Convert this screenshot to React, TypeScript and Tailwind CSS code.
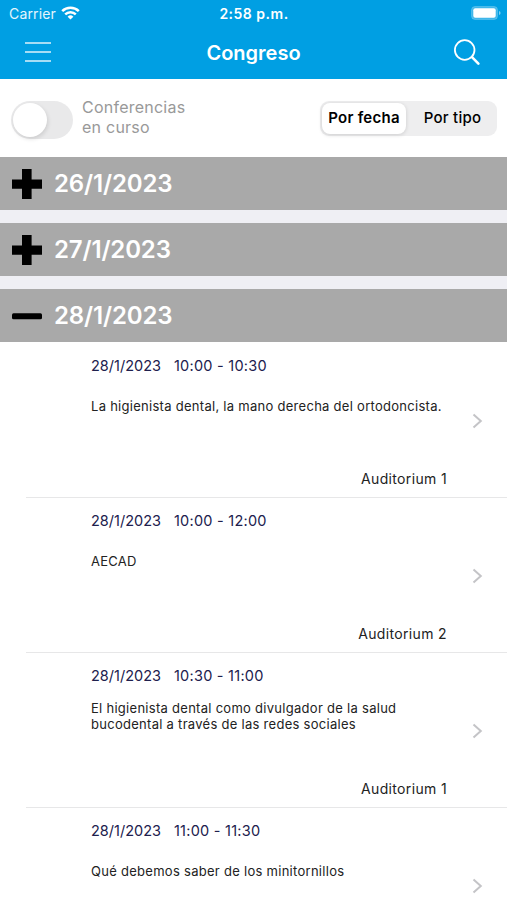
import { useState } from "react";

type Talk = {
  id: string;
  date: string;
  time: string;
  title: string;
  room?: string;
};

type Day = {
  date: string;
  talks: Talk[];
};

const days: Day[] = [
  { date: "26/1/2023", talks: [] },
  { date: "27/1/2023", talks: [] },
  {
    date: "28/1/2023",
    talks: [
      {
        id: "1",
        date: "28/1/2023",
        time: "10:00 - 10:30",
        title: "La higienista dental, la mano derecha del ortodoncista.",
        room: "Auditorium 1",
      },
      {
        id: "2",
        date: "28/1/2023",
        time: "10:00 - 12:00",
        title: "AECAD",
        room: "Auditorium 2",
      },
      {
        id: "3",
        date: "28/1/2023",
        time: "10:30 - 11:00",
        title: "El higienista dental como divulgador de la salud bucodental a través de las redes sociales",
        room: "Auditorium 1",
      },
      {
        id: "4",
        date: "28/1/2023",
        time: "11:00 - 11:30",
        title: "Qué debemos saber de los minitornillos",
      },
    ],
  },
];

function StatusBar() {
  return (
    <div className="grid h-[27px] grid-cols-3 items-center pl-[9px] pr-[6px] text-[14px] leading-none">
      <div className="flex items-center gap-[6px]">
        <span className="text-[14px] tracking-[0.15px] text-white/90">Carrier</span>
        <svg className="-ml-px -mt-px" width="19" height="14" viewBox="0 0 19 14" fill="none" stroke="white" strokeWidth="2.5">
          <path d="M1.2 5.2a11.8 11.8 0 0 1 16.6 0" />
          <path d="M4.2 8.4a7.6 7.6 0 0 1 10.6 0" />
          <path d="M9.5 13.6 6.6 10.7a4.2 4.2 0 0 1 5.8 0z" fill="white" stroke="none" />
        </svg>
      </div>
      <span className="-ml-[2px] whitespace-nowrap pt-px text-center font-semibold tracking-[0.5px]">2:58 p.m.</span>
      <svg className="-mt-px justify-self-end" width="30" height="14" viewBox="0 0 30 14">
        <rect x="0.5" y="0.5" width="26" height="13" rx="3.5" fill="white" fillOpacity="0.25" stroke="white" strokeOpacity="0.2" />
        <rect x="2.3" y="2.3" width="22.4" height="9.4" rx="2" fill="white" />
        <path d="M28 5v4q1.6-.6 1.6-2T28 5z" fill="white" fillOpacity="0.5" />
      </svg>
    </div>
  );
}

function Header() {
  return (
    <header className="h-[79px] bg-[#009fe3] text-white">
      <StatusBar />
      <div className="flex h-[51px] items-center justify-between pl-[25px] pr-[26px]">
        <button className="-mt-px flex w-[27px] flex-col gap-[7px]" aria-label="Menú">
          <span className="h-[2px] w-[26px] bg-white/65" />
          <span className="h-[2px] w-[26px] bg-white/65" />
          <span className="h-[2px] w-[26px] bg-white/65" />
        </button>
        <h1 className="pl-px text-[20px] font-semibold">Congreso</h1>
        <button aria-label="Buscar">
          <svg width="27" height="27" viewBox="0 0 27 27" fill="none" stroke="white">
            <circle cx="10.7" cy="11" r="9.8" strokeWidth="1.8" />
            <path d="M18 18.2 24.4 24.6" strokeWidth="2.6" strokeLinecap="round" />
          </svg>
        </button>
      </div>
    </header>
  );
}

function Filters() {
  const [ongoing, setOngoing] = useState(false);

  return (
    <div className="flex h-[78px] items-center justify-between bg-white pl-[11px] pr-[10px]">
      <div className="flex items-center gap-[9px]">
        <button
          role="switch"
          aria-checked={ongoing}
          aria-label="Conferencias en curso"
          onClick={() => setOngoing(!ongoing)}
          className={`mt-[4px] flex h-[38px] w-[62px] items-center rounded-full px-[2px] ${ongoing ? "justify-end bg-[#34c759]" : "bg-[#e9e9ea]"}`}
        >
          <span className="size-[34px] rounded-full bg-white shadow-[1px_2px_4px_rgba(0,0,0,0.12)]" />
        </button>
        <p className="-mt-[2px] text-[16px] leading-[20.5px] tracking-[0.24px] text-[#999999]">
          Conferencias
          <br />
          en curso
        </p>
      </div>
      <div className="flex h-[35px] w-[177px] items-center rounded-[9px] bg-[#eeeeef] p-[2px] text-[15px]">
        <button className="h-[31px] w-[84px] whitespace-nowrap rounded-[8px] bg-white font-semibold tracking-[0.25px] shadow-[0_1px_4px_rgba(0,0,0,0.14)]">
          Por fecha
        </button>
        <button className="h-full flex-1 whitespace-nowrap pl-[4px] font-medium tracking-[0.25px]">Por tipo</button>
      </div>
    </div>
  );
}

function DayHeader({ date, open, onClick }: { date: string; open: boolean; onClick: () => void }) {
  return (
    <button onClick={onClick} className="flex h-[53px] w-full items-center gap-[12px] bg-[#a9a9a9] pl-[12px] text-left">
      <svg className="mt-[1px]" width="30" height="30" viewBox="0 0 30 30">
        {open ? (
          <rect x="0" y="12.2" width="30" height="6" rx="1.5" fill="black" />
        ) : (
          <path d="M10 0h9.6v10.4H30v9.4H19.6V30H10V19.8H0v-9.4h10z" fill="black" />
        )}
      </svg>
      <span className="text-[24px] font-semibold leading-none tracking-[-0.15px] text-white">{date}</span>
    </button>
  );
}

function TalkRow({ talk }: { talk: Talk }) {
  return (
    <li className="ml-[26px] flex h-[155px] items-center border-b border-[#e7e7e8] pl-[65px] pr-[24px]">
      <div className="flex h-full w-[356px] flex-col">
        <div className="mt-[13px] flex h-[20px] items-center gap-[13px] text-[14.5px] text-[#20204d]">
          <span>{talk.date}</span>
          <span className="tracking-[0.25px]">{talk.time}</span>
        </div>
        <div className="mt-[10px] flex h-[40px] items-center">
          <p className="text-[13px] leading-[16px] tracking-[0.28px] text-[#222222]">{talk.title}</p>
        </div>
        {talk.room && (
          <span className="mt-[43px] self-end text-[14px] leading-[20px] tracking-[0.35px] text-[#222222]">{talk.room}</span>
        )}
      </div>
      <svg className="ml-auto mt-px" width="11" height="16" viewBox="0 0 11 16" fill="none" stroke="#c4c4c7" strokeWidth="2">
        <path d="M1.5 1.5 8.8 8l-7.3 6.5" />
      </svg>
    </li>
  );
}

export default function App() {
  const [openDay, setOpenDay] = useState("28/1/2023");

  return (
    <div className="h-[900px] w-[507px] overflow-hidden bg-white font-['Inter',sans-serif] text-black">
      <Header />
      <Filters />
      <div className="flex flex-col gap-[13px] bg-[#efeff4]">
        {days.map((day) => (
          <section key={day.date}>
            <DayHeader
              date={day.date}
              open={openDay === day.date}
              onClick={() => setOpenDay(openDay === day.date ? "" : day.date)}
            />
            {openDay === day.date && (
              <ul className="bg-white pt-px">
                {day.talks.map((talk) => (
                  <TalkRow key={talk.id} talk={talk} />
                ))}
              </ul>
            )}
          </section>
        ))}
      </div>
    </div>
  );
}
